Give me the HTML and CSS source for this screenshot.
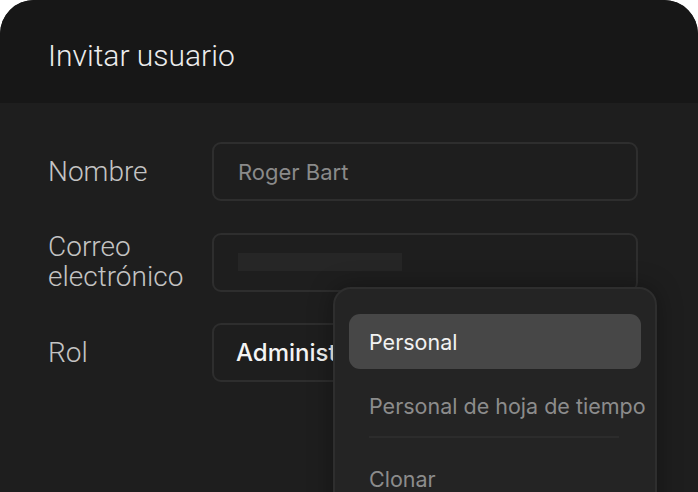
FILE: index.html
```html
<!DOCTYPE html>
<html lang="es">
<head>
    <meta charset="UTF-8">
    <meta name="viewport" content="width=device-width, initial-scale=1.0">
    <title>Invitar usuario</title>
    <link rel="stylesheet" href="styles.css">
</head>
<body>
    <div class="dialog">
        <div class="dialog-head">
            <h1>Invitar usuario</h1>
        </div>
        <div class="dialog-body">
            <div class="row">
                <label class="label">Nombre</label>
                <div class="field"><span class="value">Roger Bart</span></div>
            </div>
            <div class="row">
                <label class="label">Correo<br>electrónico</label>
                <div class="field"><span class="skeleton"></span></div>
            </div>
            <div class="row">
                <label class="label">Rol</label>
                <div class="field select"><span class="chosen">Administrador</span></div>
            </div>

            <!-- role picker, open -->
            <div class="menu">
                <div class="option active">Personal</div>
                <div class="option">Personal de hoja de tiempo</div>
                <hr class="sep">
                <div class="option">Clonar</div>
            </div>
        </div>
    </div>
</body>
</html>
```

FILE: styles.css
```css
html, body{
    margin: 0;
    height: 100%;
    background-color: #ffffff;
}
body{
    overflow: hidden;
    font-family: Roboto, "Liberation Sans", sans-serif;
}
.dialog{
    height: 100%;
    border-radius: 34px 34px 0 0;
    overflow: hidden;
    background-color: #1e1e1e;
    display: flex;
    flex-direction: column;
}
.dialog-head{
    background-color: #171717;
    height: 103px;
    padding-left: 48px;
    display: flex;
    align-items: center;
    flex-shrink: 0;
}
h1{
    margin: 8px 0 0;
    font-size: 30px;
    font-weight: 300;
    color: #ececec;
}
.dialog-body{
    position: relative;
    flex: 1;
    padding: 39px 0 0 48px;
    display: flex;
    flex-direction: column;
    gap: 31px;
}
.row{
    display: grid;
    grid-template-columns: 164px 426px;
    align-items: center;
}
.label{
    font-size: 28px;
    font-weight: 300;
    line-height: 30px;
    color: #c4c4c4;
}
.field{
    height: 55px;
    border: 2px solid #2e2e2e;
    border-radius: 9px;
    display: flex;
    align-items: center;
    padding-left: 24px;
}
.value{
    font-family: Inter, sans-serif;
    font-size: 22px;
    color: #8a8a8a;
}
.skeleton{
    width: 164px;
    height: 18px;
    background-color: #262626;
}
.select{
    padding-left: 22px;
}
/* the open menu covers the rest of the role name */
.chosen{
    max-width: 97px;
    overflow: hidden;
    white-space: nowrap;
    font-family: Inter, sans-serif;
    font-size: 24px;
    font-weight: 500;
    color: #f4f4f4;
}
.menu{
    position: absolute;
    left: 333px;
    top: 184px;
    width: 292px;
    height: 240px;
    padding: 25px 14px 0;
    background-color: #242424;
    border: 2px solid #2e2e2e;
    border-radius: 18px;
    box-shadow: 0 0 24px rgba(0, 0, 0, 0.35);
    font-family: Inter, sans-serif;
}
.option{
    height: 55px;
    display: flex;
    align-items: center;
    padding-left: 20px;
    margin-bottom: 9px;
    border-radius: 11px;
    font-size: 21.5px;
    color: #8c8c8c;
    white-space: nowrap;
}
.option.active{
    background-color: #474747;
    color: #f2f2f2;
}
.sep{
    border: 0;
    border-top: 2px solid #2c2c2c;
    margin: -6px 22px 13px 20px;
}
```
